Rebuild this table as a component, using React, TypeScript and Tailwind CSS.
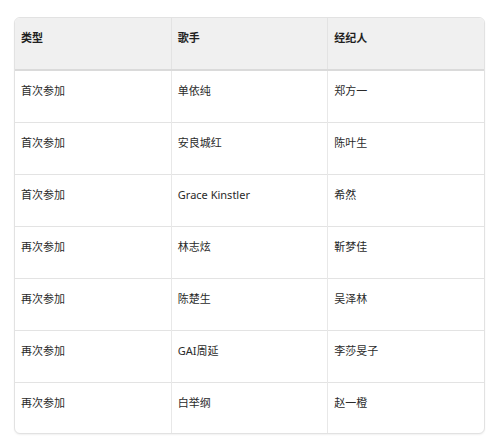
const rows = [
  { type: "首次参加", singer: "单依纯", agent: "郑方一" },
  { type: "首次参加", singer: "安良城红", agent: "陈叶生" },
  { type: "首次参加", singer: "Grace Kinstler", agent: "希然" },
  { type: "再次参加", singer: "林志炫", agent: "靳梦佳" },
  { type: "再次参加", singer: "陈楚生", agent: "吴泽林" },
  { type: "再次参加", singer: "GAI周延", agent: "李莎旻子" },
  { type: "再次参加", singer: "白举纲", agent: "赵一橙" },
];

export default function App() {
  return (
    <div
      className="h-[440px] w-[500px] bg-white pl-[14px] pt-[17px]"
      style={{ fontFamily: '"Noto Sans", "Noto Sans CJK SC", sans-serif' }}
    >
      <div className="w-[471px] overflow-hidden rounded-md border border-[#e2e2e2] bg-white shadow-[0_1px_2px_rgba(0,0,0,0.06)]">
        <table className="w-full table-fixed border-collapse text-[11px] text-[#2a2a2a]">
          <thead>
            <tr className="h-[52px] border-b-2 border-[#dadada] bg-[#f0f0f0]">
              <th className="border-r border-[#e3e3e3] px-[6px] pt-3 text-left align-top font-semibold text-[#1f1f1f]">
                类型
              </th>
              <th className="border-r border-[#e3e3e3] px-[6px] pt-3 text-left align-top font-semibold text-[#1f1f1f]">
                歌手
              </th>
              <th className="px-[6px] pt-3 text-left align-top font-semibold text-[#1f1f1f]">
                经纪人
              </th>
            </tr>
          </thead>
          <tbody>
            {rows.map((row, i) => (
              <tr
                key={row.singer}
                className={i < rows.length - 1 ? "h-[52px] border-b border-[#e3e3e3]" : "h-[51px]"}
              >
                <td className="border-r border-[#e8e8e8] px-[6px] pt-3 align-top">{row.type}</td>
                <td className="border-r border-[#e8e8e8] px-[6px] pt-3 align-top">{row.singer}</td>
                <td className="px-[6px] pt-3 align-top">{row.agent}</td>
              </tr>
            ))}
          </tbody>
        </table>
      </div>
    </div>
  );
}
